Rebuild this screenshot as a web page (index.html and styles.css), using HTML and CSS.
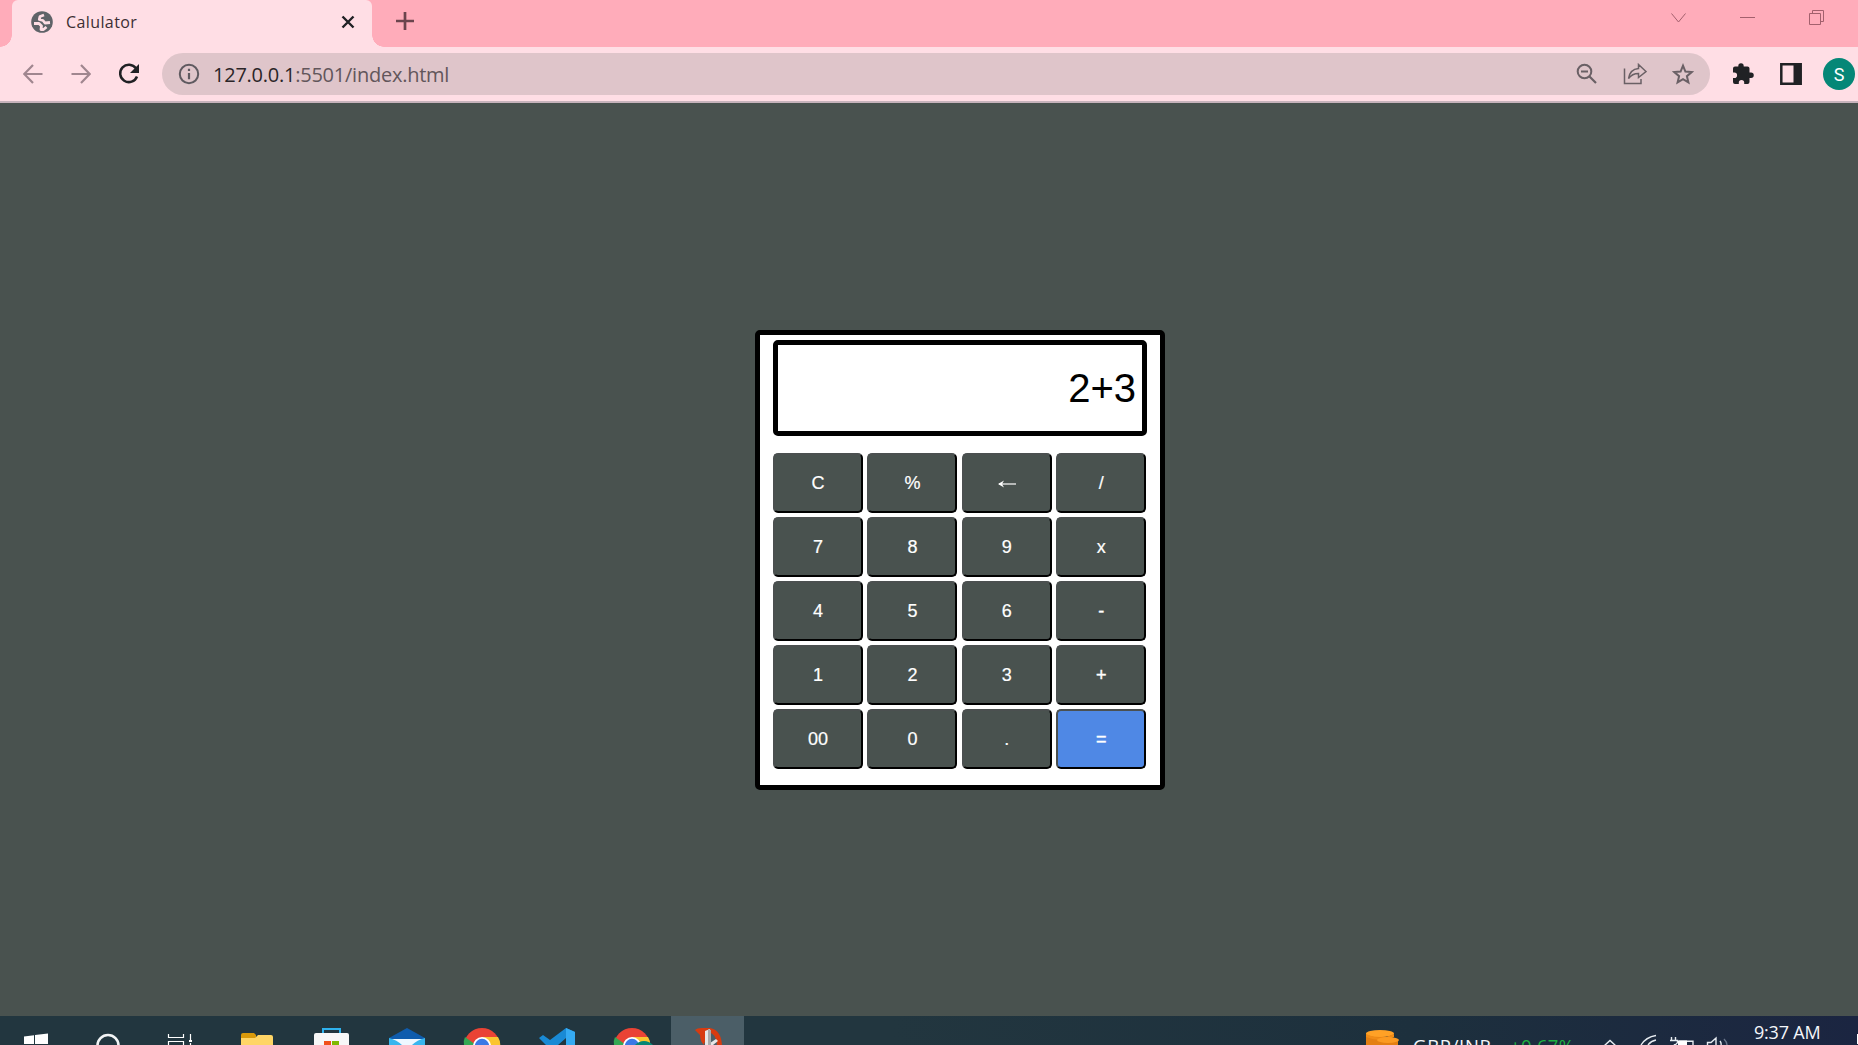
FILE: index.html
```html
<!DOCTYPE html>
<html lang="en">
<head>
<meta charset="utf-8">
<title>Calulator</title>
<link rel="stylesheet" href="styles.css">
</head>
<body>
<div class="screen">
  <header class="tabstrip">
    <div class="tab">
      <svg class="globe" width="24" height="24" viewBox="0 0 24 24"><circle cx="12" cy="12" r="10.800" fill="#5f6368"/><g fill="none" stroke="#ffdee5" stroke-width="2.800" stroke-linejoin="round"><path d="M14 5 10 6.500 9.300 9.500 13 10.500 15 13 20 12.500"/><path d="M4 13.500h5l2.500 2.500-.5 3.500h2.500l3-2.500"/></g></svg>
      <span class="tab-title">Calulator</span>
      <svg class="tab-close" width="14" height="14" viewBox="0 0 14 14"><path d="M1.500 1.500 12.500 12.500M12.500 1.500 1.500 12.500" stroke="#202124" stroke-width="2.400"/></svg>
    </div>
    <svg class="newtab" width="20" height="20" viewBox="0 0 20 20"><path d="M10 1v18M1 10h18" stroke="#6b444d" stroke-width="2.700"/></svg>
    <div class="window-controls">
      <svg width="16" height="16" viewBox="0 0 16 16"><path d="M.5 3.500 7.500 12 14.500 3.500" fill="none" stroke="#a3606d"/></svg>
      <svg width="16" height="16" viewBox="0 0 16 16"><path d="M0 7.500h15" stroke="#a3606d"/></svg>
      <svg width="16" height="16" viewBox="0 0 16 16"><path d="M.5 3.500h11v11H.5zM3.500 3.500v-3h11v11h-3" fill="none" stroke="#a3606d"/></svg>
    </div>
  </header>

  <nav class="toolbar">
    <svg class="back" width="20" height="20" viewBox="0 0 20 20"><path d="M19.500 10H1.500M10 1 1.300 10l8.700 9" fill="none" stroke="#a0868f" stroke-width="2.200"/></svg>
    <svg class="forward" width="20" height="20" viewBox="0 0 20 20"><path d="M.5 10h18M10 1l8.700 9-8.700 9" fill="none" stroke="#a0868f" stroke-width="2.200"/></svg>
    <svg class="reload" width="22" height="22" viewBox="0 0 22 22"><path d="M18 5.400A8.700 8.700 0 1 0 19 13.500" fill="none" stroke="#202124" stroke-width="2.500"/><path d="M21 1v9h-9z" fill="#202124"/></svg>
    <div class="address">
      <svg width="22" height="22" viewBox="0 0 22 22"><circle cx="11" cy="11" r="9.200" fill="none" stroke="#5f5a60" stroke-width="2"/><path d="M11 10v6.200M11 5.700v2.300" stroke="#5f5a60" stroke-width="2.200"/></svg>
      <span class="url"><b>127.0.0.1</b>:5501/index.html</span>
      <svg class="search" width="22" height="22" viewBox="0 0 22 22"><circle cx="8.500" cy="8.500" r="6.800" fill="none" stroke="#6a6065" stroke-width="2"/><path d="M5 8.500h7M13.500 13.500l6.500 6.500" stroke="#6a6065" stroke-width="2.200"/></svg>
      <svg class="share" width="24" height="22" viewBox="0 0 24 22"><path d="M1.500 5.500v15h16.500v-4.500M5.500 15.500C6.500 9 10 6 15.500 5.500V1.500L23 8.500l-7.500 6v-4C11 10.500 8 12 5.500 15.500z" fill="none" stroke="#6a6065" stroke-width="1.500"/></svg>
      <svg class="star" width="22" height="22" viewBox="0 0 22 22"><path d="m11 2.700 2.400 5.900 6.300.5-4.800 4.100 1.500 6.200-5.400-3.300-5.400 3.300 1.500-6.200-4.800-4.100 6.300-.5z" fill="none" stroke="#6a6065" stroke-width="2"/></svg>
    </div>
    <svg class="extensions" width="22" height="22" viewBox="0 0 22 22"><path fill="#202124" d="M19 9.500h-1.500V5.500a2 2 0 0 0-2-2h-3.800V3a2.700 2.700 0 0 0-5.400 0v.5H3a2 2 0 0 0-2 2v3.900h1.300a2.700 2.700 0 0 1 0 5.600H1v4a2 2 0 0 0 2 2h3.800v-1.400a2.700 2.700 0 0 1 5.400 0V21h3.300a2 2 0 0 0 2-2v-4H19a2.700 2.700 0 0 0 0-5.500z"/></svg>
    <svg class="sidepanel" width="22" height="22" viewBox="0 0 22 22"><path d="M1.300 1.300h19.400v19.400H1.300z" fill="none" stroke="#202124" stroke-width="2.500"/><path d="M13.500 1H21v20h-7.500z" fill="#202124"/></svg>
    <span class="avatar">S</span>
  </nav>

  <main class="page">
    <section class="calculator">
      <div class="display">2+3</div>
      <div class="keys">
        <button>C</button><button>%</button><button aria-label="Backspace"><svg class="arrow" width="18" height="8" viewBox="0 0 18 8"><path d="M1 4h17" stroke="#fff" stroke-width="1.200"/><path d="M0 4 6 .5 4 4l2 3.500z" fill="#fff"/></svg></button><button>/</button>
        <button>7</button><button>8</button><button>9</button><button>x</button>
        <button>4</button><button>5</button><button>6</button><button class="bold">-</button>
        <button>1</button><button>2</button><button>3</button><button class="bold">+</button>
        <button>00</button><button>0</button><button>.</button><button class="equals bold">=</button>
      </div>
    </section>
  </main>

  <footer class="taskbar">
    <div class="system">
      <svg viewBox="0 0 72 29"><path d="m24 20.500 10-1.300V28H24zM35 19l13-1.500V28H35zM24 29h24" fill="#fff"/></svg>
      <svg viewBox="0 0 72 29"><circle cx="36" cy="29.500" r="10.500" fill="none" stroke="#f2f4f5" stroke-width="2.600"/></svg>
      <svg viewBox="0 0 72 29"><path d="M24.500 18v3.500h15V18M24.500 29v-3.500h15V29M46.500 18v6M46.500 27v2" fill="none" stroke="#fff" stroke-width="1.200"/><path d="M45 24h3v2h-3z" fill="#fff"/></svg>
    </div>
    <div class="apps">
      <svg viewBox="0 0 73 29"><path d="M20 19q0-2 2-2h11l2 2v6H20z" fill="#d99a0b"/><path d="M20 22h14l3-3h13q2 0 2 2v8H20z" fill="#ffd566"/></svg>
      <svg viewBox="0 0 73 29"><path d="M27 18v-5h17v5" fill="none" stroke="#2fb2ee" stroke-width="2"/><path d="M18 29V19q0-2 2-2h31q2 0 2 2v10z" fill="#f7f7f7"/><path d="M28 25h7v4h-7z" fill="#f1511b"/><path d="M36 25h7v4h-7z" fill="#80b900"/></svg>
      <svg viewBox="0 0 73 29"><path d="M18 22 36 12l18 10v2H18z" fill="#0f5cad"/><path d="M21 23h31v6H21z" fill="#eef8ff"/><path d="M18 22q8 2 13 7H18zM54 22q-8 2-13 7h13z" fill="#38b6ee"/></svg>
      <svg viewBox="0 0 73 29"><circle cx="36" cy="30" r="18" fill="#ea4335"/><path d="M36 21h16q3 5 2 10H36z" fill="#fbc52f"/><path d="M19 21q-2 4-1 8h12z" fill="#34a853"/><circle cx="36" cy="30" r="9" fill="#fff"/><circle cx="36" cy="30" r="7.200" fill="#3b79e5"/></svg>
      <svg viewBox="0 0 73 29"><path d="m45 12 9 4v13h-9V22l-8 7H25l-7-7 4-3 7 5z" fill="#198ad5"/><path d="m45 12 9 4v13h-9z" fill="#35aaf2"/></svg>
      <svg viewBox="0 0 73 29"><circle cx="36" cy="30" r="18" fill="#ea4335"/><path d="M36 21h16q3 5 2 10H36z" fill="#fbc52f"/><path d="M19 21q-2 4-1 8h12z" fill="#34a853"/><circle cx="36" cy="30" r="9" fill="#fff"/><circle cx="36" cy="30" r="7.200" fill="#3b79e5"/><circle cx="48" cy="37" r="12" fill="#078575"/></svg>
      <svg class="active" viewBox="0 0 73 29"><path d="M24 14q2-2 7-2h8q11 2 12 17h-5q0-11-9-13l-3 1v9q-1 1-1 3-4-4-4-10z" fill="#d83b10"/><path d="m34 15 5-2v16h-5zM39 27l6-4 2 2-5 4h-3z" fill="#e6e6e6"/><path d="m37 13 3 1v15h-3z" fill="#aaa"/></svg>
    </div>
    <div class="tray">
      <svg class="coins" width="36" height="29" viewBox="0 0 36 29"><path d="M1 17v12h32v-6z" fill="#e47f12"/><ellipse cx="15" cy="17.500" rx="14" ry="3.500" fill="#ffa126"/><path d="M1 18q14 7 28 0v3q-14 6-28 0z" fill="#f18c17"/><ellipse cx="23" cy="24" rx="11" ry="3" fill="#fb9a22"/></svg>
      <span class="pair">GBP/INR</span>
      <span class="change">+0.67%</span>
      <svg class="status" width="130" height="29" viewBox="0 0 130 29"><g fill="none" stroke="#e8edf2" stroke-width="1.400"><path d="m4 30 6-5.500 6 5.500"/><path d="M41 29q5-8 15-9.500M48 29q3-4 8-5"/><path d="M71.500 21v3M75.500 21v3M70 24.500h7.500v2q-1 2-3.700 2.500M79 25.200h14V29"/><path d="M107.500 29v-2.500h3.500l5-4.500v7M120 25q1.500 2 1 4"/><path d="M124 23q3 3 3 6" stroke="#687589"/></g><path d="M78 24.500h9V29h-9z" fill="#fff"/></svg>
      <span class="clock">9:37 AM</span>
      <span class="notice"></span>
    </div>
  </footer>
</div>
</body>
</html>
```

FILE: styles.css
```css
* { box-sizing: border-box; }

body {
  margin: 0;
  font-family: "Open Sans", "Noto Sans", sans-serif;
}

svg { display: block; flex: none; }

.screen {
  display: flex;
  flex-direction: column;
  width: 1858px;
  height: 1045px;
  overflow: hidden;
}

/* Browser tabs */
.tabstrip {
  display: flex;
  height: 47px;
  padding-left: 12px;
  background: #ffacba;
}

.tab {
  position: relative;
  display: flex;
  align-items: center;
  width: 360px;
  height: 47px;
  padding: 0 18px 4px;
  border-radius: 6px 6px 0 0;
  background: #ffdee5;
}

.tab::before,
.tab::after {
  content: "";
  position: absolute;
  bottom: 0;
  width: 12px;
  height: 12px;
}

.tab::before {
  left: -12px;
  background: radial-gradient(circle at 0 0, #ffacba 11.5px, #ffdee5 12px);
}

.tab::after {
  right: -12px;
  background: radial-gradient(circle at 100% 0, #ffacba 11.5px, #ffdee5 12px);
}

.tab-title {
  margin: 0 auto 0 12px;
  font-size: 16px;
  letter-spacing: 0.4px;
  color: #3c2e33;
}

.tab-close { margin-right: -1px; }
.newtab { margin: 11px 0 0 23px; }

.window-controls {
  display: flex;
  gap: 53px;
  margin: 10px 33px 0 auto;
}

/* Navigation and address bar */
.toolbar {
  display: flex;
  align-items: center;
  height: 56px;
  padding: 0 3px 0 23px;
  border-bottom: 2px solid #c7b3bc;
  background: #ffdee5;
}

.forward { margin-left: 28px; }
.reload { margin-left: 27px; }

.address {
  display: flex;
  align-items: center;
  width: 1548px;
  height: 42px;
  margin-left: 22px;
  padding: 0 16px;
  border-radius: 21px;
  background: #dfc5ca;
}

.url {
  margin: 1px auto 0 13px;
  font-size: 20px;
  line-height: 28px;
  letter-spacing: -0.24px;
  color: #62565b;
}

.url b {
  font-weight: 400;
  color: #2b2528;
}

.share { margin-left: 25px; }
.star { margin-left: 25px; }
.extensions { margin-left: 22px; }
.sidepanel { margin-left: 26px; }

.avatar {
  width: 32px;
  height: 32px;
  margin-left: 21px;
  border-radius: 50%;
  background: #058777;
  color: #fff;
  font: 18px/33px Roboto, sans-serif;
  text-align: center;
}

/* Calculator */
.page {
  display: flex;
  justify-content: center;
  align-items: center;
  height: 913px;
  padding: 1px 0 0 62px;
  background: #49524f;
}

.calculator {
  width: 410px;
  height: 460px;
  padding: 5px 13px;
  border: 5px solid #000;
  border-radius: 5px;
  background: #fff;
  font-family: "Liberation Sans", Arial, sans-serif;
}

.display {
  height: 96px;
  padding-right: 6px;
  border: 5px solid #000;
  border-radius: 5px;
  font-size: 40px;
  line-height: 86px;
  text-align: right;
}

.keys {
  display: grid;
  grid-template-columns: repeat(4, 90px);
  grid-auto-rows: 60px;
  gap: 4px 4.4px;
  margin-top: 17px;
}

.keys button {
  display: flex;
  justify-content: center;
  align-items: center;
  padding: 0;
  border: 2px solid;
  border-color: #4b5050 #000 #000 #4b5050;
  border-radius: 5px;
  background: #49524f;
  color: #fff;
  font: 18px "Liberation Sans", Arial, sans-serif;
  -webkit-text-stroke: 0.2px #fff;
}

.keys .bold { -webkit-text-stroke: 0.4px #fff; }
.keys .equals { background: #4f88e5; }
.arrow { margin-top: 2px; }

/* Taskbar */
.taskbar {
  display: flex;
  height: 29px;
  overflow: hidden;
  background: linear-gradient(90deg, #22363f 0%, #22363f 48%, #1d303d 76%, #1b2541 100%);
}

.system, .apps, .tray { display: flex; }
.system svg { width: 72px; height: 29px; }
.apps { gap: 2px; margin-left: 5px; }
.apps svg { width: 73px; height: 29px; }
.apps .active { background: #4b5e67; }

.tray {
  margin-left: auto;
  color: #f4f6fa;
  white-space: nowrap;
}

.pair, .change {
  margin-top: 18px;
  font-size: 18.5px;
  line-height: 24px;
}

.pair { width: 97px; margin-left: 12px; letter-spacing: 0.7px; }
.change { width: 74px; color: #1fb141; letter-spacing: 0.3px; }
.status { margin-left: 16px; }

.clock {
  width: 66px;
  margin: 3px 0 0 24px;
  font-size: 18px;
  line-height: 26px;
  letter-spacing: -0.2px;
}

.notice {
  width: 1px;
  height: 10px;
  margin: 18px 0 0 37px;
  background: #fff;
}
```
